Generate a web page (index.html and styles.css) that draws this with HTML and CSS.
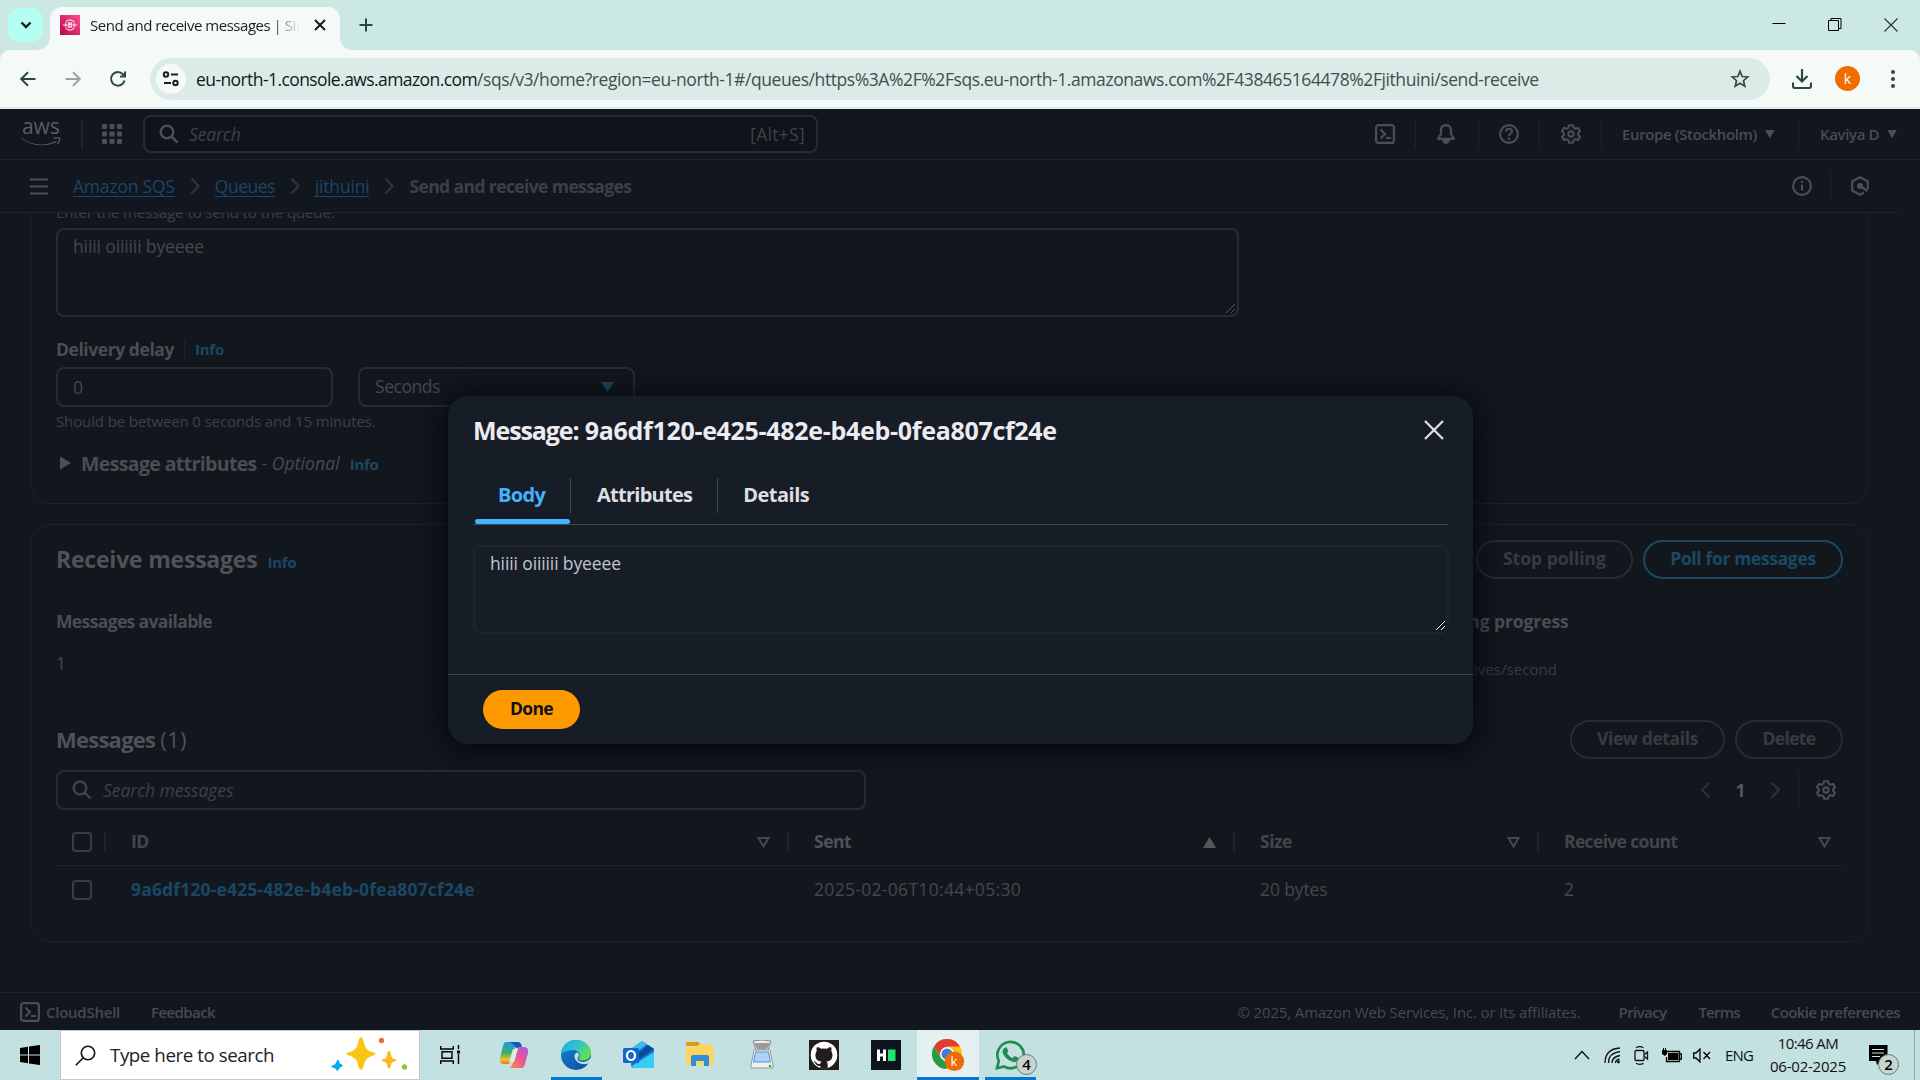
FILE: index.html
```html
<!DOCTYPE html>
<html lang="en">
<head>
<meta charset="utf-8">
<title>Send and receive messages</title>
<link rel="stylesheet" href="styles.css">
</head>
<body>
<div class="tabstrip">
  <div class="tabsearch"><svg width="14" height="14" viewBox="0 0 14 14"><path d="M2.500 4.500 7 9l4.500-4.500" fill="none" stroke="#10201d" stroke-width="2.400"/></svg></div>
  <div class="tab">
    <svg class="favicon" width="20" height="20" viewBox="0 0 20 20"><defs><linearGradient id="pk" x1="0" y1="1" x2="1" y2="0"><stop offset="0" stop-color="#b0084d"/><stop offset="1" stop-color="#ff4f8b"/></linearGradient></defs><path fill="url(#pk)" d="M0 0h20v20H0z"/><g fill="none" stroke="#ffd3e2" stroke-width="1.100"><path d="M5.500 7.500a5.200 5.200 0 0 1 9 0M5.500 12.500a5.200 5.200 0 0 0 9 0M2.800 10h4M13.200 10h4M5 8.500 6.800 10 5 11.500M15 8.500 13.200 10 15 11.500"/><path d="M8.300 7.800h3.400v4.400H8.300zM8.300 7.800l3.400 4.400M11.700 7.800l-3.400 4.400"/></g></svg>
    <span class="tabtitle">Send and receive messages | Sim</span>
    <svg class="tabclose" width="12" height="12" viewBox="0 0 12 12"><path d="m1 1 10 10M11 1 1 11" stroke="#10201d" stroke-width="2"/></svg>
  </div>
  <svg class="newtab" width="14" height="14" viewBox="0 0 14 14"><path d="M7 .5v13M.5 7h13" stroke="#2c4842" stroke-width="2"/></svg>
  <div class="winctl">
    <svg width="14" height="14" viewBox="0 0 14 14"><path d="M.5 5.500h13" stroke="#000"/></svg>
    <svg width="14" height="14" viewBox="0 0 14 14"><path d="M.5 2.500h10v10H.5zM3 2.500V.5h10v10h-2.500" fill="none" stroke="#000"/></svg>
    <svg width="14" height="14" viewBox="0 0 14 14"><path d="m.5.5 13 13m0-13-13 13" stroke="#26312f" stroke-width="1.100"/></svg>
  </div>
</div>
<div class="toolbarwrap"><div class="toolbar">
  <svg class="nav" width="20" height="20" viewBox="0 0 20 20"><path d="M17.500 10H3.500M10 3.200 3.200 10l6.800 6.800" fill="none" stroke="#2c4842" stroke-width="2"/></svg>
  <svg class="nav" width="20" height="20" viewBox="0 0 20 20"><path d="M2.500 10h14M10 3.200l6.800 6.800-6.800 6.800" fill="none" stroke="#9aa8a5" stroke-width="2"/></svg>
  <svg class="nav" width="20" height="20" viewBox="0 0 20 20"><path d="M16.500 11.500A6.800 6.800 0 1 1 15 5.300l1.800 1.900M17 2.500v5h-5" fill="none" stroke="#2c4842" stroke-width="2"/></svg>
  <div class="omnibox">
    <span class="siteinfo"><svg width="18" height="18" viewBox="0 0 18 18"><g fill="none" stroke="#17211f" stroke-width="2"><circle cx="4" cy="4.500" r="2.200"/><path d="M9 4.500h7"/><circle cx="13.500" cy="13" r="2.200"/><path d="M2 13h7"/></g></svg></span>
    <span class="url"><b>eu-north-1.console.aws.amazon.com</b>/sqs/v3/home?region=eu-north-1#/queues/https%3A%2F%2Fsqs.eu-north-1.amazonaws.com%2F438465164478%2Fjithuini/send-receive</span>
    <svg class="star" width="20" height="20" viewBox="0 0 20 20"><path d="m10 2.300 2.200 5.200 5.600.5-4.300 3.700 1.300 5.500-4.800-2.900-4.800 2.900 1.300-5.500L2.200 8l5.600-.5z" fill="none" stroke="#3a4a47" stroke-width="1.700"/></svg>
  </div>
  <svg class="dl" width="20" height="20" viewBox="0 0 20 20"><path d="M10 0v12M4.500 7 10 12.500 15.500 7M1 13.500V17q0 2 2 2h14q2 0 2-2v-3.500" fill="none" stroke="#2c4842" stroke-width="2.200"/></svg>
  <span class="avatar">k</span>
  <svg class="dots" width="4" height="18" viewBox="0 0 4 18"><g fill="#2c4842"><circle cx="2" cy="2" r="2"/><circle cx="2" cy="9" r="2"/><circle cx="2" cy="16" r="2"/></g></svg>
</div></div>

<div class="console">
  <header class="awsnav">
    <div class="logo"><span>aws</span><svg width="40" height="10" viewBox="0 0 40 10"><path d="M0 .5q17 12 35 3.500l.5 1.200Q17 13 0 1.500z" fill="#54575b"/><path d="M32.500 1.500q5-1.500 6-.5t-2 6" fill="none" stroke="#54575b" stroke-width="1.500"/></svg></div>
    <svg class="apps" width="20" height="20" viewBox="0 0 20 20"><g fill="#4b4e54"><rect width="5" height="5" rx="1"/><rect x="7.500" width="5" height="5" rx="1"/><rect x="15" width="5" height="5" rx="1"/><rect y="7.500" width="5" height="5" rx="1"/><rect x="7.500" y="7.500" width="5" height="5" rx="1"/><rect x="15" y="7.500" width="5" height="5" rx="1"/><rect y="15" width="5" height="5" rx="1"/><rect x="7.500" y="15" width="5" height="5" rx="1"/><rect x="15" y="15" width="5" height="5" rx="1"/></g></svg>
    <div class="navsearch"><svg width="20" height="20" viewBox="0 0 20 20"><g fill="none" stroke="#4b4e54" stroke-width="2.500"><circle cx="8" cy="8" r="6.300"/><path d="m12.500 12.500 6 6"/></g></svg><i>Search</i><span>[Alt+S]</span></div>
    <div class="navright">
      <div class="nc"><svg width="20" height="20" viewBox="0 0 20 20"><g fill="none" stroke="#4b4e54" stroke-width="2.200"><rect x="1.100" y="1.100" width="17.800" height="17.800" rx="2.500"/><path d="m5.500 5.500 4.500 4.500-4.500 4.500M11 14h5"/></g></svg></div>
      <div class="nc bell"><svg width="20" height="20" viewBox="0 0 20 20"><path d="M10 1.200c-3.500 0-5 2.500-5 5.300V10l-3 4.800h16L15 10V6.500c0-2.800-1.500-5.300-5-5.300z" fill="none" stroke="#4b4e54" stroke-width="2.200" stroke-linejoin="round"/><path d="M6 16h8q-.8 4-4 4t-4-4" fill="#4b4e54"/></svg></div>
      <div class="nc"><svg width="20" height="20" viewBox="0 0 20 20"><g fill="none" stroke="#4b4e54" stroke-width="2.100"><circle cx="10" cy="10" r="8.900"/><path d="M7 7.800c0-4 6-3.700 6-.5 0 2.200-3 2.300-3 5M10 13.800v2.200"/></g></svg></div>
      <div class="nc"><svg width="20" height="20" viewBox="0 0 20 20"><g fill="none" stroke="#4b4e54" stroke-width="2.100" stroke-linejoin="round"><path d="M8 1.200h4l.6 2.500 1.900 1.100 2.500-.9 2 3.400-1.800 1.700v2l1.800 1.700-2 3.400-2.500-.9-1.900 1.100-.6 2.500H8l-.6-2.500-1.900-1.100-2.500.9-2-3.400L2.800 11V9L1 7.300l2-3.400 2.500.9 1.900-1.100z"/><circle cx="10" cy="10" r="2.600"/></g></svg></div>
      <div class="nc region"><span>Europe (Stockholm)</span><u></u></div>
      <div class="nc user"><span>Kaviya D</span><u></u></div>
    </div>
  </header>
  <nav class="crumbs">
    <svg class="burger" width="18" height="17" viewBox="0 0 18 17"><path d="M0 1.500h18M0 8.500h18M0 15.500h18" stroke="#4b4e54" stroke-width="2.200"/></svg>
    <a class="c1">Amazon SQS</a><svg class="chev" width="10" height="18" viewBox="0 0 10 18"><path d="m1.500 1.500 7 7.500-7 7.500" fill="none" stroke="#30343c" stroke-width="2.300"/></svg>
    <a class="c2">Queues</a><svg class="chev" width="10" height="18" viewBox="0 0 10 18"><path d="m1.500 1.500 7 7.500-7 7.500" fill="none" stroke="#30343c" stroke-width="2.300"/></svg>
    <a class="c3">jithuini</a><svg class="chev" width="10" height="18" viewBox="0 0 10 18"><path d="m1.500 1.500 7 7.500-7 7.500" fill="none" stroke="#30343c" stroke-width="2.300"/></svg>
    <strong>Send and receive messages</strong>
    <div class="crumbright">
      <svg width="20" height="20" viewBox="0 0 20 20"><g fill="none" stroke="#4b4e54" stroke-width="2.100"><circle cx="10" cy="10" r="8.900"/><path d="M10 8.500v6M10 5v2"/></g></svg>
      <span class="cdiv"></span>
      <svg width="20" height="20" viewBox="0 0 20 20"><path d="M17.800 13V5.500L10 1.200 2.200 5.500v9l7.800 4.300 4-2.300" fill="none" stroke="#4b4e54" stroke-width="2.200"/><path d="m10 10 7.500 5" stroke="#4b4e54" stroke-width="2.400"/><circle cx="10" cy="10" r="3" fill="#4b4e54"/></svg>
    </div>
  </nav>
  <main>
    <section class="panel send">
      <p class="helper">Enter the message to send to the queue.</p>
      <div class="area">hiiii oiiiiii byeeee<svg class="grip" width="9" height="9" viewBox="0 0 9 9"><path d="M0 9 9 0M5 9l4-4" stroke="#54575b"/></svg></div>
      <div class="delay"><b>Delivery delay</b><span class="vd"></span><a class="info">Info</a></div>
      <div class="fields"><div class="field">0</div><div class="field sel"><span>Seconds</span><u></u></div></div>
      <p class="hint">Should be between 0 seconds and 15 minutes.</p>
      <div class="attrs"><s></s><b>Message attributes</b><i>- Optional</i><a class="info">Info</a></div>
    </section>
    <section class="panel recv">
      <div class="phead"><h2>Receive messages</h2><a class="info">Info</a><button class="stop">Stop polling</button><button class="poll">Poll for messages</button></div>
      <div class="kv"><div><b>Messages available</b><span>1</span></div><div class="prog"><b>Polling progress</b><span>0 receives/second</span></div></div>
      <div class="mhead"><h3>Messages <span>(1)</span></h3><button class="view">View details</button><button class="del">Delete</button></div>
      <div class="filter">
        <div class="fsearch"><svg width="20" height="20" viewBox="0 0 20 20"><g fill="none" stroke="#43474d" stroke-width="2.300"><circle cx="8" cy="8" r="6.300"/><path d="m12.500 12.500 6 6"/></g></svg><i>Search messages</i></div>
        <div class="pager">
          <svg width="11" height="18" viewBox="0 0 11 18"><path d="M9.500 1.500 2 9l7.500 7.500" fill="none" stroke="#2c3038" stroke-width="2.200"/></svg><b>1</b>
          <svg width="11" height="18" viewBox="0 0 11 18"><path d="M1.500 1.500 9 9l-7.500 7.500" fill="none" stroke="#2c3038" stroke-width="2.200"/></svg><span class="pdiv"></span>
          <svg width="20" height="20" viewBox="0 0 20 20"><g fill="none" stroke="#4b4e54" stroke-width="2.100" stroke-linejoin="round"><path d="M8 1.200h4l.6 2.500 1.900 1.100 2.500-.9 2 3.400-1.800 1.700v2l1.800 1.700-2 3.400-2.500-.9-1.900 1.100-.6 2.500H8l-.6-2.500-1.900-1.100-2.500.9-2-3.400L2.800 11V9L1 7.300l2-3.400 2.500.9 1.900-1.100z"/><circle cx="10" cy="10" r="2.600"/></g></svg>
        </div>
      </div>
      <div class="grid th"><div class="ck"><em></em></div><div>ID<svg width="13" height="11" viewBox="0 0 13 11"><path d="M1.500 1h10l-5 8.500z" fill="none" stroke="#44484f" stroke-width="2"/></svg></div><div class="sorted">Sent<svg width="13" height="11" viewBox="0 0 13 11"><path d="M0 11h13L6.500 0z" fill="#54575c"/></svg></div><div>Size<svg width="13" height="11" viewBox="0 0 13 11"><path d="M1.500 1h10l-5 8.500z" fill="none" stroke="#44484f" stroke-width="2"/></svg></div><div>Receive count<svg width="13" height="11" viewBox="0 0 13 11"><path d="M1.500 1h10l-5 8.500z" fill="none" stroke="#44484f" stroke-width="2"/></svg></div></div>
      <div class="grid tr"><div class="ck"><em></em></div><div class="mid">9a6df120-e425-482e-b4eb-0fea807cf24e</div><div class="date">2025-02-06T10:44+05:30</div><div>20 bytes</div><div>2</div></div>
    </section>
  </main>
  <footer class="foot">
    <svg width="20" height="20" viewBox="0 0 20 20"><g fill="none" stroke="#4b4e54" stroke-width="2.200"><rect x="1.100" y="1.100" width="17.800" height="17.800" rx="2.500"/><path d="m5.500 5.500 4.500 4.500-4.500 4.500M11 14h5"/></g></svg>
    <span class="cs">CloudShell</span><span class="fb">Feedback</span>
    <span class="copy">© 2025, Amazon Web Services, Inc. or its affiliates.</span><span class="pr">Privacy</span><span class="te">Terms</span><span class="ckp">Cookie preferences</span>
  </footer>
  <div class="modal">
    <div class="mtop"><h1><span>Message:</span> 9a6df120-e425-482e-b4eb-0fea807cf24e</h1><svg width="20" height="20" viewBox="0 0 20 20"><path d="m1 1 18 18M19 1 1 19" stroke="#dedee3" stroke-width="2.300"/></svg></div>
    <div class="mtabs"><span class="on">Body</span><span class="at">Attributes</span><span class="de">Details</span></div>
    <div class="marea">hiiii oiiiiii byeeee<svg class="grip" width="9" height="9" viewBox="0 0 9 9"><path d="M0 8 8 0M4 8l4-4" stroke="#000"/><path d="M0 9 9 0M5 9l4-4" stroke="#fff"/></svg></div>
    <div class="mfoot"><button class="done">Done</button></div>
  </div>
</div>

<div class="taskbar">
  <div class="start"><svg width="20" height="20" viewBox="0 0 20 20"><path d="M0 3 8 1.800v7.700H0zM9 1.600 20 0v9.500H9zM0 10.500h8v7.700L0 17zM9 10.500h11V20L9 18.400z"/></svg></div>
  <div class="tsearch"><svg width="21" height="21" viewBox="0 0 21 21"><g fill="none" stroke="#111" stroke-width="1.600"><circle cx="13" cy="8" r="6.700"/><path d="M8.300 12.800.8 20.300"/></g></svg><span>Type here to search</span>
    <svg class="spark" width="78" height="36" viewBox="0 0 78 36"><path d="M30 0q2 0 3.300 7t10 8.500q2.200 1.200 0 2.500Q34.500 20.500 33.300 26.500q-1.200 6.500-3.300 6.500t-3.300-6.500Q25.500 20.500 16.700 18q-2.200-1.300 0-2.500Q25.400 14 26.700 7T30 0z" fill="#fcc419"/><path d="M58 14q1.500 0 2 4t5 4.500q1 .7 0 1.500-4.500.700-5 3.500-.5 4-2 4t-2-4q-.5-2.800-5-3.500-1-.8 0-1.500 4.500-.5 5-4.500t2-4z" fill="#fbb823"/><path d="m7 23 1.500 4 3 1.500-3 2-2 3-2-2.500-4-1.500 4-2z" fill="#00a9f0" stroke="#00a9f0"/><circle cx="50.500" cy="3.500" r="2.700" fill="#f2693a"/><circle cx="73.500" cy="30" r="2.700" fill="#8cc63f"/></svg>
  </div>
  <div class="app tv"><svg width="20" height="20" viewBox="0 0 20 20"><path d="M.7 1v3h12.600V1M.7 19v-3h12.600v3M2 6.700h10v6.600H2zM18.500 0v4M18.500 9v10" fill="none" stroke="#000" stroke-width="1.400"/><path d="M17 5.500h3v3h-3z"/></svg></div>
  <div class="app"><svg width="30" height="28" viewBox="0 0 30 28"><defs><linearGradient id="ca" x1="0" y1="0" x2="0" y2="1"><stop offset="0" stop-color="#2097e8"/><stop offset=".5" stop-color="#3dae68"/><stop offset=".8" stop-color="#f4c327"/><stop offset="1" stop-color="#f26a30"/></linearGradient><linearGradient id="cb" x1="1" y1="0" x2="0" y2="1"><stop offset="0" stop-color="#a45be8"/><stop offset=".5" stop-color="#f0568a"/><stop offset="1" stop-color="#fb923c"/></linearGradient></defs><path d="M7 1h13q-3 1-4 5l-4 14q-1 3-4 3H5q-5 0-4-6L4 5q1-4 3-4z" fill="url(#ca)"/><path d="M9 1h10q3 0 4 5l-6 1q-2-5-8-6z" fill="#1756c0"/><path d="M23 27H10q3-1 4-5l4-13q1-3 4-3h3q5 0 4 6l-3 11q-1 4-3 4z" fill="url(#cb)"/><path d="M14 8h5l-4 13h-5z" fill="#d7eee9"/></svg></div>
  <div class="app run"><svg width="30" height="30" viewBox="0 0 30 30"><defs><linearGradient id="ea" x1="0" y1="0" x2="1" y2=".5"><stop offset="0" stop-color="#1aa9dc"/><stop offset=".5" stop-color="#2cc3cf"/><stop offset="1" stop-color="#63dd55"/></linearGradient><linearGradient id="eb" x1="0" y1="0" x2="1" y2="1"><stop offset="0" stop-color="#1686d9"/><stop offset="1" stop-color="#0c4a94"/></linearGradient></defs><circle cx="15" cy="15" r="15" fill="url(#eb)"/><path d="M0 14C1 5 7 0 15 0c9 0 15 6 15 13 0 5-4 7.500-8 7.500-3.500 0-5-1.500-4-3C20 14 17 10 12 10 6 10 1 13 0 14z" fill="url(#ea)"/><path d="M17 13c2 2 0 4-.5 5.500 0 3 5 4 8 3 2-.5 4-2 5.500-4v4l-2.500 2c-4 1.500-9 .5-11.500-2-3-3-3-6.500-1.500-8q1.500-1.500 2.500-.5z" fill="#c3e1e0"/></svg></div>
  <div class="app"><svg width="31" height="28" viewBox="0 0 31 28"><path d="M8 8 19 0l12 8v16q0 3-3 3H11q-3 0-3-3z" fill="#1976d2"/><path d="m8 8 11-8 5 3-13 10z" fill="#3bbcf0"/><path d="m31 8-20 14v-6L25 4z" fill="#0a4a9c"/><path d="M31 11v13q0 3-3 3H11q-2 0-2-2z" fill="#38cdf4"/><rect y="7" width="16" height="15" rx="1.500" fill="#1068c8"/><ellipse cx="8" cy="14.500" rx="4" ry="4.500" fill="none" stroke="#fff" stroke-width="2.200"/></svg></div>
  <div class="app"><svg width="28" height="26" viewBox="0 0 28 26"><path d="M0 1.500Q0 0 1.500 0H12q1.500 0 1.500 1.500V4H0z" fill="#dc9b08"/><path d="M0 5h10l3-2.500h13q1.500 0 1.500 1.500v17q0 2-2 2h-24Q0 23 0 21z" fill="#ffd45e"/><path d="M5 24v-9q0-2 2-2h14q2 0 2 2v9h-5v-5h-8v5z" fill="#2f8ddb"/></svg></div>
  <div class="app"><svg width="24" height="30" viewBox="0 0 24 30"><path d="M3 1q9-2 18 0l-3 9H6z" fill="#eee" stroke="#888"/><path d="m4 3 16 0-3 6H7z" fill="#9b9b9b"/><path d="M4 10h16l3 15v3H1v-3z" fill="#f1f1f1" stroke="#999"/><path d="M5.500 12h13l2 10h-17z" fill="#a9d3fb" stroke="#5592d0"/><circle cx="20" cy="26" r="1.300" fill="#35b535"/></svg></div>
  <div class="app"><svg width="30" height="30" viewBox="0 0 30 30"><path fill="#211d1e" d="M0 0h30v30H0z"/><circle cx="15" cy="15" r="13.300" fill="#fff"/><path d="M8 7q2 0 4 1.800 3-.7 6 0Q20 7 22 7q1 2 .3 4.300 1.200 1.700 1.200 4 0 5.700-6 6.200 1.200 1.200 1.200 3V28q-3.700 1-7.400 0v-2.200q-4 .6-5.300-3-.5-1-1.500-1.500 2-.5 3 1.500 1.300 1.800 3.800 1 .2-1.500 1.100-2.300-6-.5-6-6.200 0-2.300 1.300-4Q7 9 8 7z" fill="#211d1e"/></svg></div>
  <div class="app"><svg width="30" height="30" viewBox="0 0 30 30"><path fill="#0e141e" d="M0 0h30v30H0z"/><path d="M6 9.500h3v4h3v-4h3V21h-3v-4.500H9V21H6z" fill="#fff"/><path fill="#1fe36c" d="M17 9.500h7.500V21H17z"/></svg></div>
  <div class="app active"><svg width="33" height="32" viewBox="0 0 33 32"><circle cx="15" cy="15" r="15" fill="#fbc116"/><path d="M2 7.500A15 15 0 0 1 28 7.500H15L9 18z" fill="#e33b2e"/><path d="M2 7.500 9 19q4 5 9 3l-4 8A15 15 0 0 1 2 7.500z" fill="#239d4b"/><circle cx="15" cy="15" r="7" fill="#fff"/><circle cx="15" cy="15" r="5.500" fill="#3b7de8"/><circle cx="22.500" cy="22.300" r="9.700" fill="#ee6c08"/></svg><span class="cb">k</span></div>
  <div class="app wa"><svg width="30" height="30" viewBox="0 0 30 30"><path d="M2 28.200 3.800 21A13.200 13.200 0 1 1 9 26.500z" fill="none" stroke="#1f8e52" stroke-width="2.700"/><path d="M10 7.500q1.500-.7 2.200 1l1 2.500q0 1-1.200 2 2 3.700 5.500 5.200l1.700-1.900q.8-.5 4 1.500.8 1-.7 3-2 2-5 1-6.500-2-9.500-8-1.500-4 2-6.300z" fill="#1f8e52"/></svg><span class="badge">4</span></div>
  <div class="tray">
    <div><svg width="16" height="10" viewBox="0 0 16 10"><path d="m1 9 7-7.500L15 9" fill="none" stroke="#111" stroke-width="1.400"/></svg></div>
    <div><svg width="17" height="17" viewBox="0 0 17 17"><g fill="none" stroke="#111" stroke-width="1.300"><path d="M1 16Q1 2 16 1"/><path d="M4.500 16Q4.500 6 16 4.700"/><path d="M8 16q0-6 8-7.500"/><path d="M11.500 16q0-3 4-4"/></g><circle cx="14.500" cy="15" r="1.400"/></svg></div>
    <div><svg width="16" height="19" viewBox="0 0 16 19"><g fill="none" stroke="#111" stroke-width="1.300"><rect x="1" y="4.500" width="9" height="10" rx="1"/><path d="M10.500 8.500 13.500 6v7l-3-2.500M2 1.700Q5.500-.5 9.500 1.700M2 17.300q3.500 2 7.500 0"/></g></svg></div>
    <div><svg width="20" height="15" viewBox="0 0 20 15"><path d="M5 3.500h12.500v10h-13V9M18 6h1.500v5H18" fill="none" stroke="#000" stroke-width="1.300"/><path d="M6 5h10.500v7H6zM0 2h5v4L3 8 0 6zM1 0h1v2H1zM3 0h1v2H3z"/></svg></div>
    <div><svg width="18" height="15" viewBox="0 0 18 15"><path d="M.7 5H3l4-4v13L3 10H.7zM10.500 4l6.500 7M17 4l-6.500 7" fill="none" stroke="#000" stroke-width="1.300"/></svg></div>
    <span class="eng">ENG</span>
    <div class="clock"><span>10:46 AM</span><span class="dt">06-02-2025</span></div>
    <div class="notif"><svg width="20" height="20" viewBox="0 0 20 20"><path d="M0 0h18.500v16H12l-4 4-1-4H0z"/><path d="M3 4.500h12M3 8h12M3 11.500h8" stroke="#cce4e2" stroke-width="1.200"/></svg><span class="badge">2</span></div>
    <div class="peek"></div>
  </div>
</div>
</body>
</html>
```
FILE: styles.css
```css
*{box-sizing:border-box}
body{margin:0;width:1920px;height:1080px;overflow:hidden;font-family:"Open Sans","Noto Sans",sans-serif;display:flex;flex-direction:column;background:#11151d}
svg{display:block;flex:none}
h1,h2,h3,p{margin:0}
button{font-family:inherit;background:none;padding:0;white-space:nowrap}
span,a,b,i,strong,h1,h2,h3{white-space:nowrap}
.tabstrip{height:50px;background:#cce8e2;display:flex;align-items:flex-start;flex:none}
.tabsearch{width:35px;height:34px;margin:8px 7px 0 8px;border-radius:12px;background:#b3fff2;display:flex;align-items:center;justify-content:center}
.tab{width:290px;height:43px;margin-top:7px;background:#f5faf8;border-radius:12px 12px 0 0;display:flex;align-items:center;padding:0 14px 7px 10px;position:relative}
.tab::before,.tab::after{content:"";position:absolute;bottom:0;width:12px;height:12px}
.tab::before{left:-12px;background:radial-gradient(circle at 0 0,transparent 11.5px,#f5faf8 12px)}
.tab::after{right:-12px;background:radial-gradient(circle at 100% 0,transparent 11.5px,#f5faf8 12px)}
.tabtitle{margin-left:10px;width:210px;overflow:hidden;font-size:15px;letter-spacing:-.47px;color:#17211f;-webkit-mask-image:linear-gradient(90deg,#000 86%,transparent);mask-image:linear-gradient(90deg,#000 86%,transparent)}
.tabclose{margin-left:auto}
.newtab{margin:18px 0 0 19px}
.winctl{margin:18px 22px 0 auto;display:flex;gap:42px}
.toolbarwrap{background:#cce8e2;flex:none}
.toolbar{height:59px;background:#f5faf8;border-bottom:2px solid #daece7;border-radius:10px 10px 0 0;display:flex;align-items:center;padding:1px 23px 1px 18px}
.nav{margin-right:25px}
.nav:nth-child(3){margin-right:22px}
.omnibox{width:1620px;height:42px;border-radius:21px;background:#dbece8;display:flex;align-items:center;padding:0 20px 0 6px;margin-right:22px}
.siteinfo{width:30px;height:30px;border-radius:50%;background:#f5faf8;display:flex;align-items:center;justify-content:center;margin-right:10px}
.url{font-size:17.5px;letter-spacing:-.42px;color:#424f4c;padding-top:1px}
.url b{font-weight:400;letter-spacing:-.58px;color:#101a18}
.star{margin-left:auto}
.avatar{width:25px;height:25px;border-radius:50%;background:#ef6c00;color:#fff;font-size:14px;line-height:25px;text-align:center;margin:0 31px 0 23px}

.console{height:921px;position:relative;display:flex;flex-direction:column;color:#44484e;font-size:17.5px;letter-spacing:-.12px;background:#12161e;flex:none}
.awsnav{height:51px;border-bottom:1px solid #1e232b;display:flex;align-items:center;flex:none}
.logo{width:62px;height:30px;margin-left:21px;border-right:2px solid #1e232b;color:#5a5d61;font-size:21px}
.logo span{display:block;line-height:15px;padding-left:1px}
.logo svg{margin-top:3px}
.apps{margin:0 21px 0 19px}
.navsearch{width:675px;height:38px;border:2px solid #262b34;border-radius:8px;background:#0f131a;display:flex;align-items:center;padding:0 11px 0 14px}
.navsearch i{margin-left:10px;color:#3e4248}
.navsearch span{margin-left:auto;color:#3e4248;letter-spacing:.3px}
.navright{margin-left:auto;display:flex;align-items:center;font-size:15px;font-weight:600;letter-spacing:-.37px;color:#494c52}
.nc{width:61px;height:28px;border-left:1px solid #1e232b;display:flex;align-items:center;justify-content:center}
.nc:first-child{border:0}
.bell{width:63px;padding-right:2px}
.nc:nth-child(4){width:62px}
.region{width:197px;justify-content:flex-start;padding-left:20px}
.user{width:122px;justify-content:flex-start;padding-left:21px}
.nc u{width:10px;height:9px;margin-left:8px;background:#4b4e54;clip-path:polygon(0 0,100% 0,50% 100%)}
.crumbs{height:53px;border-bottom:1px solid #1e232b;margin-right:21px;display:flex;align-items:center;padding-left:30px;flex:none}
.crumbs a{color:#1c4565;border-bottom:1px solid #1c4565;line-height:20px;letter-spacing:-.2px}
.crumbs .c2{letter-spacing:-.5px}
.burger{margin-right:25px}
.chev{margin:0 15px}
.crumbs strong{color:#3c4046;font-weight:700;letter-spacing:-.6px}
.crumbright{margin-left:auto;display:flex;align-items:center;margin-right:29px}
.cdiv{width:1px;height:30px;background:#1e232b;margin:0 19px 0 18px}
main{flex:1;overflow:hidden;padding:0 51px 0 30px}
.panel{border:1px solid #1d222a;border-radius:20px;padding:0 25px;background:#12171d}
.send{height:291px;border-top:0;border-radius:0 0 20px 20px;display:flow-root}
.helper,.hint{font-size:15px;line-height:20px;color:#3d4147}
.helper{margin-top:-11px}
.area{position:relative;width:1183px;height:89px;border:2px solid #272c34;border-radius:8px;margin-top:6px;padding:6px 15px;line-height:20px}
.grip{position:absolute;right:2px;bottom:2px}
.delay{display:flex;align-items:center;height:20px;margin-top:22px}
.delay b,.attrs b{color:#4a4d53;letter-spacing:-.43px}
.vd{width:1px;height:20px;background:#1e232b;margin:0 10px}
.info{font-size:15px;font-weight:700;letter-spacing:-.23px;color:#1b4765}
.fields{display:flex;gap:25px;margin-top:8px}
.field{width:277px;height:40px;border:2px solid #272c34;border-radius:8px;padding:0 15px;display:flex;align-items:center}
.sel{justify-content:space-between;padding:0 19px 2px 15px;letter-spacing:-.45px}
.sel u{width:13px;height:10px;margin-top:2px;background:#1c4864;clip-path:polygon(0 0,100% 0,50% 100%)}
.hint{margin-top:4px}
.attrs{display:flex;align-items:center;height:20px;margin-top:22px}
.attrs s{width:11px;height:13px;margin:0 10px 0 4px;background:#4b4e54;clip-path:polygon(0 0,100% 50%,0 100%)}
.attrs b{font-size:19.5px;letter-spacing:-.63px}
.attrs i{margin-left:5px;letter-spacing:.08px;color:#484b51}
.attrs .info{margin:2px 0 0 10px}
.recv{height:418px;margin-top:20px;padding-top:15px}
.phead{height:39px;display:flex;align-items:center}
.phead .info{margin:5px auto 0 10px}
h2{font-size:23px;letter-spacing:-.21px;color:#4f5258;font-weight:700;padding-bottom:2px}
h3{font-size:22px;letter-spacing:-.75px;color:#4f5258;font-weight:700;padding-bottom:2px}
h3 span{font-weight:400;letter-spacing:.4px}
button{height:39px;border:2px solid #272c34;border-radius:20px;font-size:17.5px;font-weight:700;letter-spacing:-.36px;color:#373b41;margin-left:10px;padding-bottom:3px}
.stop{width:157px;letter-spacing:0}
.poll{width:200px;border-color:#1c4864;color:#1c4864}
.view{width:155px;margin-left:auto}
.del{width:108px;letter-spacing:-.65px}
.kv{display:flex;height:62px;margin-top:32px;line-height:20px}
.kv>div{width:1375px;display:flex;flex-direction:column;gap:22px}
.kv b{color:#4a4d53;letter-spacing:-.63px}
.kv .prog{gap:28px;font-size:15px;width:auto}
.kv .prog b{font-size:17.5px;letter-spacing:-.1px}
.prog span{color:#383c42;letter-spacing:.05px}
.mhead{display:flex;align-items:center;height:39px;margin-top:47px}
.filter{display:flex;margin-top:11px;height:40px}
.fsearch{width:810px;border:2px solid #272c34;border-radius:8px;display:flex;align-items:center;padding-left:14px}
.fsearch i{margin-left:11px;color:#3d4148;letter-spacing:-.05px}
.pager{margin-left:auto;display:flex;align-items:center;padding-right:7px}
.pager b{width:59px;text-align:center;color:#55585d}
.pdiv{width:1px;height:39px;background:#1e232b;margin:0 17px}
.grid{display:grid;grid-template-columns:50px 683px 446px 304px 304px;align-items:center}
.th{height:45px;margin-top:11px;padding-bottom:3px;border-bottom:1px solid #1e232b;font-weight:700;letter-spacing:-.5px;color:#42464c}
.grid>div{padding-left:25px;height:21px;line-height:21px;display:flex;align-items:center}
.grid>.ck{padding-left:16px}
.th>div{border-right:2px solid #1e232b}
.th>div:last-child{border:0;letter-spacing:-.65px}
.th svg{margin:1px 17px 0 auto}
.th>div:last-child svg{margin-right:12px}
.th .sorted{color:#4f5258}
.tr{height:48px;padding-bottom:1px}
.ck em{width:20px;height:20px;border:2px solid #393d46;border-radius:4px}
.tr .mid{color:#1b4765;font-weight:700;letter-spacing:.16px}
.tr .date{letter-spacing:.31px}
.foot{height:38px;border-top:1px solid #1e232b;display:flex;align-items:center;padding:0 20px;font-size:15px;font-weight:600;letter-spacing:-.58px;color:#464a50;flex:none}
.cs{margin-left:6px;letter-spacing:-.25px}
.fb{margin-left:31px}
.copy{margin-left:auto;font-weight:400;letter-spacing:-.13px}
.pr{margin-left:38px}
.te{margin-left:32px;letter-spacing:-.8px}
.ckp{margin-left:31px}
.modal{position:absolute;left:448px;top:287px;width:1025px;height:348px;border-radius:20px;background:#171d26;box-shadow:0 4px 28px 4px rgba(0,5,13,.85);color:#dedee3}
.mtop{display:flex;align-items:center;justify-content:space-between;height:68px;padding:0 29px 0 25px}
h1{font-size:25px;letter-spacing:-.3px;color:#ebebf0;font-weight:700;padding-bottom:1px}
h1 span{letter-spacing:-1.1px}
.mtabs{display:flex;height:61px;margin:0 25px;border-bottom:1px solid #424650;font-size:20px;font-weight:700;letter-spacing:-.65px;padding-top:14px}
.mtabs span{height:35px;line-height:34px;padding:0 25px;border-right:1px solid #424650;color:#dedee3}
.mtabs .at{letter-spacing:-.74px;padding-left:26px}
.mtabs .de{border:0;letter-spacing:-.5px}
.mtabs .on{color:#42b4ff;position:relative;width:98px}
.mtabs .on::after{content:"";position:absolute;left:2px;right:0;top:41px;height:5px;border-radius:3px;background:#42b4ff}
.marea{position:relative;height:89px;margin:20px 24px 0 25px;border:2px solid #1e242d;border-radius:8px;padding:6px 15px;line-height:20px;color:#c2c5cc}
.mfoot{margin-top:40px;border-top:1px solid #424650;padding:15px 35px}
.done{width:97px;margin:0;border:0;background:#ff9900;color:#0f141a;letter-spacing:-.6px}

.taskbar{height:50px;background:#c3e1e0;display:flex;flex:none}
.start{width:60px;padding:15px 0 0 20px}
.tsearch{width:360px;background:#fff;border:1px solid #c4c9c9;display:flex;align-items:center;padding-left:14px;font-size:18.75px;letter-spacing:-.45px;color:#222}
.tsearch span{margin:-2px 0 0 14px}
.spark{margin-left:auto;margin-right:10px}
.app{width:62px;display:flex;align-items:center;justify-content:center;position:relative}
.tv{width:63px;padding-right:4px}
.run::after,.active::after,.wa::after{content:"";position:absolute;left:6px;right:5px;bottom:0;height:3px;background:#0078d7}
.active{background:#e4f1f0}
.active::after{left:0;right:0}
.cb{position:absolute;left:27px;top:22px;width:20px;text-align:center;font-size:13px;color:#fff}
.badge{position:absolute;left:37px;top:24px;width:21px;height:21px;border:1px solid #68787a;border-radius:50%;background:#c8d3d2;color:#000;font-size:15px;font-weight:600;line-height:19px;text-align:center}
.tray{margin-left:auto;display:flex;align-items:center;font-size:15px;color:#111}
.tray>div{width:30px;display:flex;justify-content:center}
.eng{width:44px;text-align:center;letter-spacing:-.8px}
.tray .clock{width:94px;flex-direction:column;align-items:center;line-height:23px;letter-spacing:-.6px}
.clock .dt{letter-spacing:-.23px}
.tray .notif{width:48px;height:50px;align-items:center;position:relative}
.notif .badge{left:23px}
.tray .peek{width:12px;height:50px;border-right:1px solid #93aaa9;margin-right:5px}
```
